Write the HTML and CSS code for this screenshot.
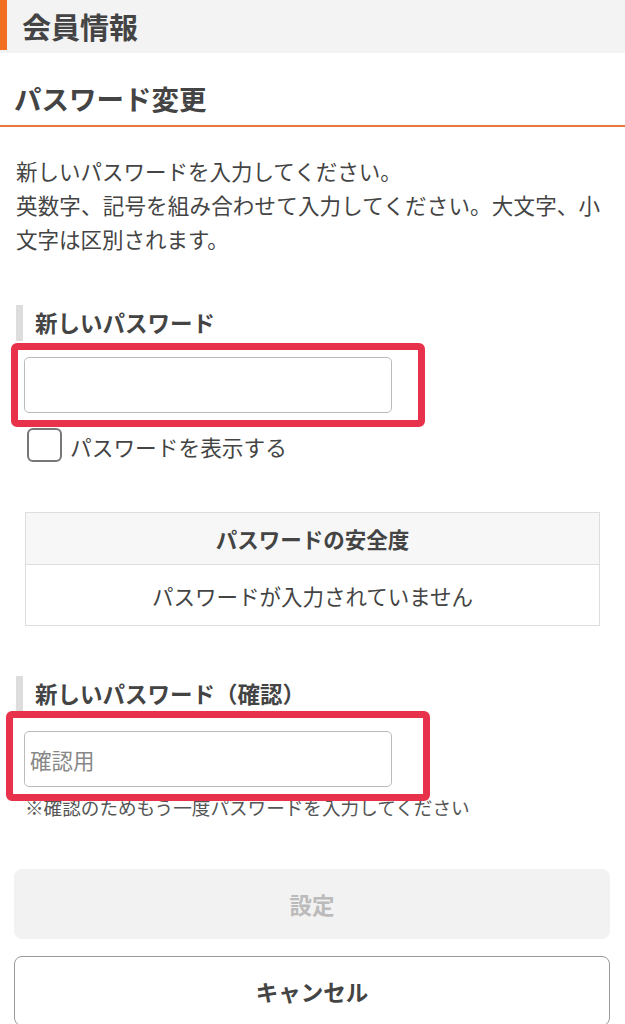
FILE: index.html
```html
<!DOCTYPE html>
<html lang="ja">
<head>
    <meta charset="UTF-8">
    <meta name="viewport" content="width=device-width, initial-scale=1.0">
    <title>会員情報 | パスワード変更</title>
    <link rel="stylesheet" href="styles.css">
</head>
<body>
    <header class="page-head">
        <h1>会員情報</h1>
    </header>

    <h2 class="section-title">パスワード変更</h2>

    <p class="lead">新しいパスワードを入力してください。<br>英数字、記号を組み合わせて入力してください。大文字、小文字は区別されます。</p>

    <div class="field">
        <label class="field-label" for="new-pass">新しいパスワード</label>
        <div class="input-wrap">
            <input type="password" id="new-pass" class="text-input">
            <span class="mark mark-first"></span>
        </div>
        <label class="show-pass">
            <input type="checkbox" class="check">
            <span>パスワードを表示する</span>
        </label>
    </div>

    <table class="strength">
        <tr><th>パスワードの安全度</th></tr>
        <tr><td>パスワードが入力されていません</td></tr>
    </table>

    <div class="field field-confirm">
        <label class="field-label" for="confirm-pass">新しいパスワード（確認）</label>
        <div class="input-wrap">
            <input type="password" id="confirm-pass" class="text-input" placeholder="確認用">
            <span class="mark mark-second"></span>
        </div>
        <p class="note">※確認のためもう一度パスワードを入力してください</p>
    </div>

    <div class="actions">
        <button class="btn btn-submit" disabled>設定</button>
        <button class="btn btn-cancel">キャンセル</button>
    </div>
</body>
</html>
```

FILE: styles.css
```css
body {
    margin: 0;
    font-family: "Noto Sans CJK JP", "Noto Sans", sans-serif;
    color: #444;
    background: #fff;
}
.page-head {
    height: 53px;
    background: #f3f3f3;
}
.page-head h1 {
    margin: 0;
    height: 50px;
    border-left: 7px solid #f26f21;
    padding-left: 15px;
    font-size: 29px;
    line-height: 52px;
    font-weight: bold;
}
.section-title {
    margin: 0;
    padding: 18px 0 0 14px;
    height: 54px;
    line-height: 54px;
    font-size: 27.5px;
    font-weight: bold;
    border-bottom: 2px solid #e8793a;
}
.lead {
    margin: 27px 25px 0 16px;
    font-size: 21.5px;
    line-height: 34px;
    text-align: justify;
}
.field {
    margin-top: 49px;
}
.field-confirm {
    margin-top: 50px;
}
.field-label {
    display: block;
    margin-left: 16px;
    padding-left: 12px;
    border-left: 7px solid #ddd;
    height: 36px;
    font-size: 22.5px;
    font-weight: bold;
    line-height: 34px;
}
.input-wrap {
    position: relative;
    margin: 16px 0 0 24px;
    width: 368px;
}
.field-confirm .input-wrap {
    margin-top: 19px;
}
.text-input {
    display: block;
    box-sizing: border-box;
    width: 368px;
    height: 56px;
    border: 1px solid #bbb;
    border-radius: 5px;
    padding: 0 5px;
    font-family: inherit;
    font-size: 21.5px;
    color: #444;
    background: #fff;
}
.text-input::placeholder {
    color: #888;
}
.mark {
    position: absolute;
    z-index: 1;
    box-sizing: border-box;
    border: 7px solid #e8314a;
    border-radius: 6px;
    pointer-events: none;
}
.mark-first {
    top: -14px;
    left: -13px;
    width: 414px;
    height: 84px;
}
.mark-second {
    top: -20px;
    left: -18px;
    width: 424px;
    height: 90px;
}
.show-pass {
    display: flex;
    align-items: center;
    gap: 8px;
    margin: 14px 0 0 27px;
    font-size: 21.7px;
}
.check {
    appearance: none;
    margin: 0;
    width: 35px;
    height: 34px;
    border: 2px solid #777;
    border-radius: 6px;
    background: #fff;
}
.show-pass span {
    padding-top: 4px;
}
.strength {
    margin: 50px 25px 0 25px;
    width: 575px;
    border-collapse: collapse;
    font-size: 21.5px;
    text-align: center;
}
.strength th,
.strength td {
    border: 1px solid #ddd;
    padding: 0;
}
.strength th {
    height: 51px;
    background: #f7f7f7;
    font-weight: bold;
}
.strength td {
    height: 60px;
}
.note {
    margin: 7px 0 0 25px;
    font-size: 18.6px;
    line-height: 26px;
    color: #555;
}
.actions {
    display: flex;
    flex-direction: column;
    gap: 17px;
    margin: 49px 15px 0 14px;
}
.btn {
    height: 70px;
    border-radius: 8px;
    font-family: inherit;
    font-size: 22.5px;
    font-weight: bold;
}
.btn-submit {
    border: none;
    background: #f2f2f2;
    color: #bbb;
}
.btn-cancel {
    border: 1px solid #999;
    background: #fff;
    color: #444;
}
```
